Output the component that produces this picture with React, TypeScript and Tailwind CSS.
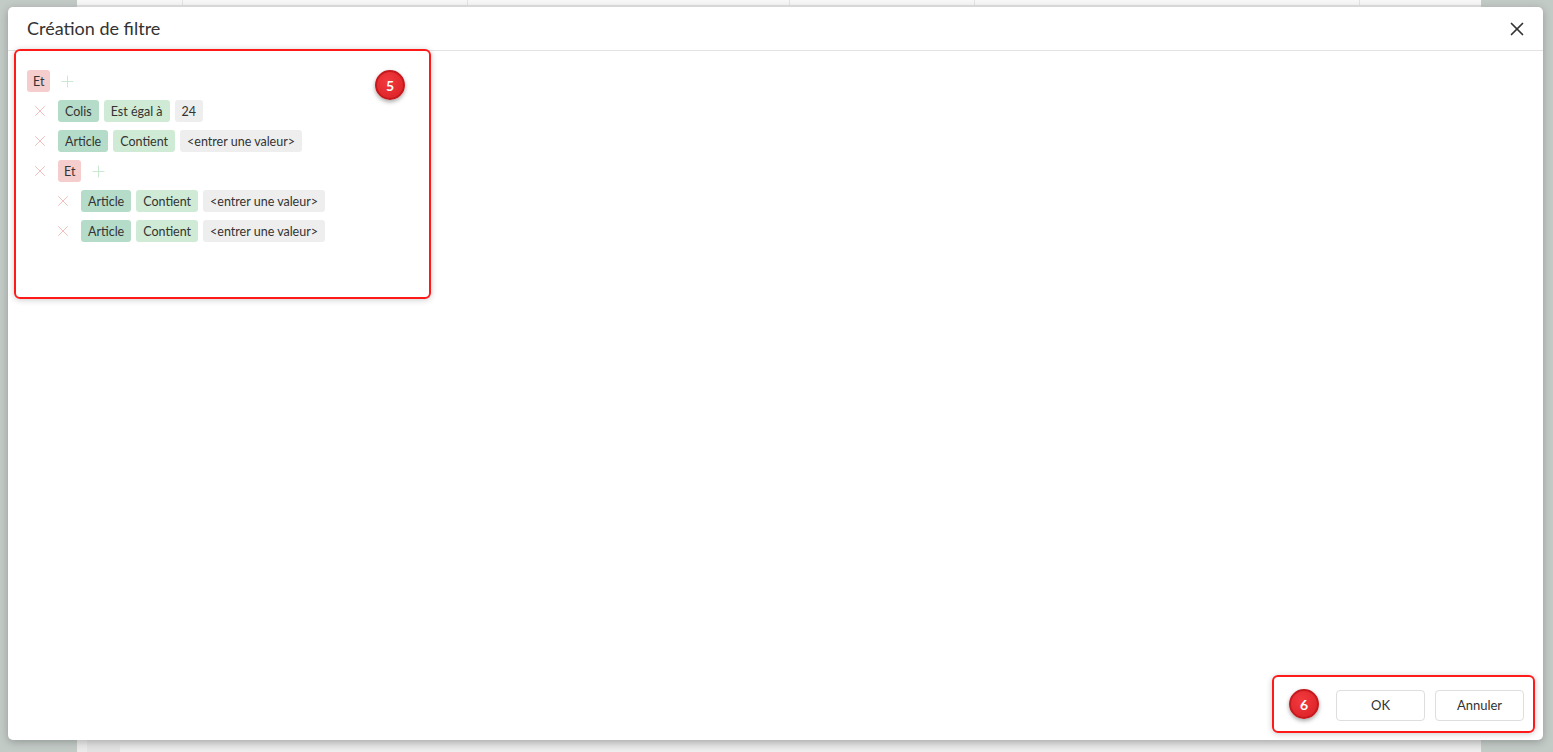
import { X, Plus } from "lucide-react";

type Chip = { label: string; kind: "field" | "op" | "value" };

const chipColors: Record<Chip["kind"], string> = {
    field: "bg-[#b5dcc9]",
    op: "bg-[#d0ebd5]",
    value: "bg-[#eeeeee]",
};

function Tag({ label, kind }: Chip) {
    return (
        <span className={`h-[22px] px-[7px] rounded-[3px] text-[12.5px] leading-[23px] text-[#333] whitespace-nowrap ${chipColors[kind]}`}>
            {label}
        </span>
    );
}

function Remove() {
    return <X className="w-[18px] h-[18px] text-[#f2bdbd] shrink-0" strokeWidth={1.3} />;
}

function GroupHead() {
    return (
        <div className="flex items-center gap-[8px]">
            <span className="h-[22px] px-[6px] rounded-[3px] bg-[#f6cdcd] text-[12.5px] leading-[23px] text-[#333]">Et</span>
            <Plus className="w-[19px] h-[19px] text-[#c8e7cd]" strokeWidth={1.2} />
        </div>
    );
}

function Condition({ chips }: { chips: Chip[] }) {
    return (
        <div className="flex items-center h-[22px]">
            <Remove />
            <div className="flex items-center gap-[5px] ml-[9px]">
                {chips.map(c => <Tag key={c.label + c.kind} {...c} />)}
            </div>
        </div>
    );
}

function Badge({ n }: { n: number }) {
    return (
        <span className="w-[30px] h-[30px] rounded-full bg-[radial-gradient(circle_at_40%_35%,#f23a3e,#d91f24)] border-2 border-[#c41a1e] shadow-[0_2px_4px_rgba(0,0,0,0.35)] flex items-center justify-center text-white text-[14px] font-bold">
            {n}
        </span>
    );
}

const colis: Chip[] = [
    { label: "Colis", kind: "field" },
    { label: "Est égal à", kind: "op" },
    { label: "24", kind: "value" },
];
const article: Chip[] = [
    { label: "Article", kind: "field" },
    { label: "Contient", kind: "op" },
    { label: "<entrer une valeur>", kind: "value" },
];

export default function App() {
    return (
        <div className="relative w-full h-[752px] overflow-hidden font-['Lato','Open_Sans',sans-serif]">
            {/* page behind the dialog */}
            <div className="flex h-full">
                <div className="w-[77px] bg-[#c3cbc7]" />
                <div className="flex-1 flex flex-col bg-[#e9e9e9]">
                    <div className="h-[6px] bg-[#f8f8f8] border-b border-[#e2e2e2] flex">
                        <div className="w-[106px] border-r border-[#e4e4e4]" />
                        <div className="w-[285px] border-r border-[#e4e4e4]" />
                        <div className="w-[322px] border-r border-[#e4e4e4]" />
                        <div className="w-[185px] border-r border-[#e4e4e4]" />
                        <div className="w-[385px] border-r border-[#e4e4e4]" />
                    </div>
                    <div className="flex-1" />
                    <div className="h-[12px] flex bg-gradient-to-b from-[#dedede] to-[#efefef]">
                        <div className="w-[10px] bg-[#eaeaea]" />
                        <div className="w-[33px] bg-[#e2e2e2]" />
                    </div>
                </div>
                <div className="w-[72px] bg-[#c3cbc7]" />
            </div>

            {/* dialog */}
            <div className="absolute left-[8px] top-[7px] w-[1535px] h-[733px] bg-white rounded-[5px] shadow-[0_2px_8px_rgba(0,0,0,0.25)] flex flex-col">
                <div className="h-[44px] shrink-0 border-b border-[#e3e3e3] flex items-center justify-between pl-[19px] pr-[15px]">
                    <h2 className="text-[18px] text-[#333]">Création de filtre</h2>
                    <X className="w-[22px] h-[22px] text-[#333]" strokeWidth={1.9} />
                </div>

                <div className="flex-1 flex flex-col justify-between">
                    <div className="relative ml-[6px] -mt-[2px] w-[417px] h-[250px] border-2 border-[#ff1a1a] rounded-[6px] shadow-[0_1px_6px_rgba(0,0,0,0.2)] pt-[19px] pl-[11px]">
                        <div className="flex flex-col gap-[8px]">
                            <GroupHead />
                            <div className="flex flex-col gap-[8px] pl-[4px]">
                                <Condition chips={colis} />
                                <Condition chips={article} />
                                <div className="flex items-center h-[22px]">
                                    <Remove />
                                    <div className="ml-[9px]"><GroupHead /></div>
                                </div>
                                <div className="flex flex-col gap-[8px] pl-[23px]">
                                    <Condition chips={article} />
                                    <Condition chips={article} />
                                </div>
                            </div>
                        </div>
                        <div className="absolute top-[19px] right-[24px]"><Badge n={5} /></div>
                    </div>

                    <div className="flex justify-end pr-[8px] pb-[7px]">
                        <div className="w-[263px] h-[58px] border-2 border-[#ff1a1a] rounded-[6px] shadow-[0_1px_6px_rgba(0,0,0,0.2)] flex items-center pl-[15px] pr-[9px]">
                            <Badge n={6} />
                            <div className="flex gap-[10px] ml-auto pt-[2px]">
                                <button className="w-[89px] h-[31px] border border-[#dedede] rounded-[4px] bg-white text-[13px] text-[#333] pt-[2px]">OK</button>
                                <button className="w-[89px] h-[31px] border border-[#dedede] rounded-[4px] bg-white text-[13px] text-[#333] pt-[2px]">Annuler</button>
                            </div>
                        </div>
                    </div>
                </div>
            </div>
        </div>
    );
}
